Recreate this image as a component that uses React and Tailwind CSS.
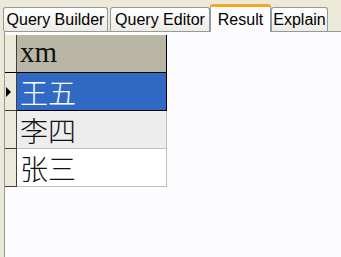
export default function App() {
  const tabs = [
    { label: 'Query Builder', w: 'w-[105px]', active: false },
    { label: 'Query Editor', w: 'w-[100px]', active: false },
    { label: 'Result', w: 'w-[61px]', active: true },
    { label: 'Explain', w: 'w-[57px]', active: false },
  ]

  const rows = [
    { xm: '王五', bg: 'bg-[#316AC5] text-white', selected: true },
    { xm: '李四', bg: 'bg-[#EDEDED] text-[#111]', selected: false },
    { xm: '张三', bg: 'bg-white text-[#111]', selected: false },
  ]

  return (
    <div
      className="w-[341px] h-[257px] bg-[#ECE9D8] flex flex-col overflow-hidden"
      style={{ fontFamily: '"Liberation Sans", sans-serif' }}
    >
      {/* Tab strip */}
      <div className="h-[31px] flex items-end pl-[3px] shrink-0">
        {tabs.map((tab, i) => (
          <div
            key={tab.label}
            className={
              tab.active
                ? `${tab.w} h-[28px] -mb-px relative z-10 bg-[#FCFCFE] border-x border-[#919B9C] border-t-[3px] border-t-[#F5A623] rounded-t-[3px] flex items-center justify-center text-[16px] text-black`
                : `${tab.w} h-[24px] ${i === 1 ? 'ml-[2px]' : ''} bg-gradient-to-b from-[#FFFFFF] to-[#ECEBE4] border border-b-0 border-[#919B9C] rounded-t-[3px] flex items-center justify-center text-[16px] text-black`
            }
          >
            {tab.label}
          </div>
        ))}
      </div>

      {/* Panel */}
      <div className="flex-1 ml-[4px] border-l border-t border-[#919B9C] bg-[#FCFCFE] pt-[3px]">
        <div className="w-[162px]" style={{ fontFamily: '"Liberation Serif", "Noto Sans CJK SC", serif' }}>
          {/* Header */}
          <div className="flex h-[38px]">
            <div className="w-[12px] bg-[#ECE9D8] border-r border-[#404040] border-b border-b-black" />
            <div className="flex-1 bg-[#BAB6A4] border-r border-black border-b border-b-black flex items-center pl-[3px] text-[29px] leading-none text-[#111] pb-[2px]">
              xm
            </div>
          </div>
          {/* Rows */}
          {rows.map((r) => (
            <div key={r.xm} className="flex h-[38px]">
              <div className="w-[12px] bg-[#ECE9D8] border-r border-b border-[#404040] flex items-center">
                {r.selected && (
                  <span className="w-0 h-0 border-y-[5px] border-y-transparent border-l-[5px] border-l-black ml-[1px]" />
                )}
              </div>
              <div
                className={`flex-1 ${r.bg} border-r border-b ${r.selected ? 'border-black' : 'border-[#BFBFBF]'} flex items-center pl-[3px] text-[28px] leading-none`}
                style={{ fontFamily: '"Noto Sans CJK SC", serif', fontWeight: 300 }}
              >
                {r.xm}
              </div>
            </div>
          ))}
        </div>
      </div>
    </div>
  )
}
